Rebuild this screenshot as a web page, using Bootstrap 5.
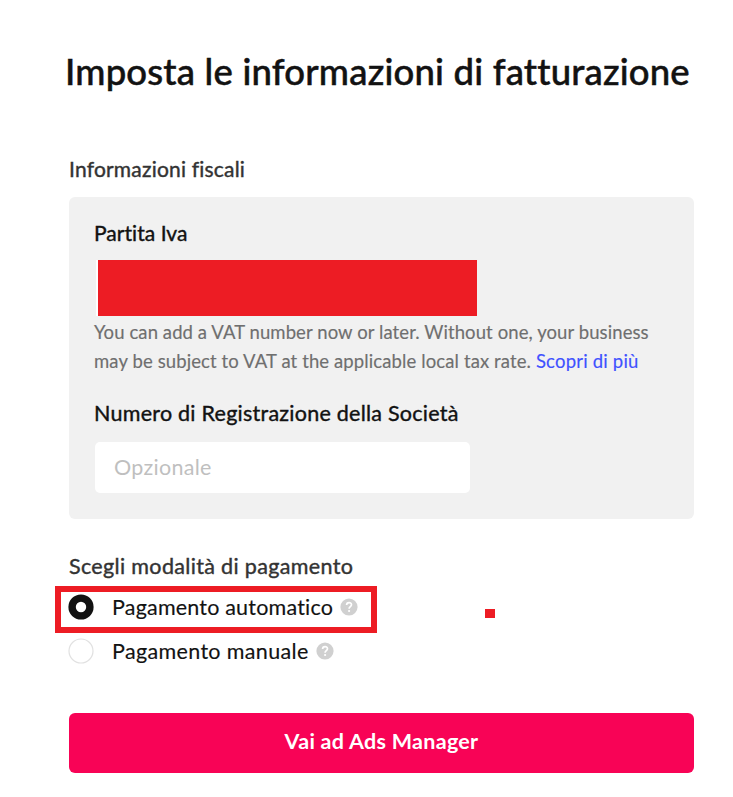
<!DOCTYPE html>
<html lang="it">
<head>
<meta charset="utf-8">
<meta name="viewport" content="width=device-width, initial-scale=1">
<title>Imposta le informazioni di fatturazione</title>
<link href="https://cdn.jsdelivr.net/npm/bootstrap@5.3.0/dist/css/bootstrap.min.css" rel="stylesheet">
<style>
body{font-family:Lato,"Open Sans",sans-serif;font-variant-ligatures:none;color:#121212;background:#fff;overflow:hidden}
.billing{width:625px;margin-left:69px;padding-top:47px}
.page-title{font-size:36.5px;line-height:48px;font-weight:500;letter-spacing:.19px;-webkit-text-stroke:.5px;margin:0 0 59px -4px;white-space:nowrap}
.label-text{font-size:21px;line-height:30px;-webkit-text-stroke:.4px;white-space:nowrap}
.section-label{color:#333}
.fiscal-label{letter-spacing:.2px}
.vat-label{letter-spacing:.05px}
.reg-label{font-size:21.5px;letter-spacing:.25px}
.choice-label{margin-top:32px;font-size:21.5px;letter-spacing:.34px}
.tax-panel{height:322px;margin-top:13px;padding:21px 25px 0;background:#f1f1f1;border-radius:6px}
.vat-field{width:381px;height:56px;margin:12px 0 0 2px;background:#ed1c24;border-left:2px solid #fff}
.help-text{font-size:18.5px;line-height:29px;letter-spacing:.09px;color:#6f6f6f;-webkit-text-stroke:.15px;margin:2px 0 22px;white-space:nowrap}
.help-text a{color:#3f51ff;letter-spacing:.2px}
.help-line{letter-spacing:.11px}
.reg-input{width:375px;height:51px;margin:14px 0 0 1px;padding:0 19px 2px;font-size:21.5px;letter-spacing:.3px;border:0;border-radius:5px}
.reg-input::placeholder{color:#bfbfbf;opacity:1}
.method{font-size:21.5px;line-height:30px;letter-spacing:.19px;-webkit-text-stroke:.15px;white-space:nowrap}
.method-auto{width:322px;height:47px;margin:5px 0 0 -14px;padding:0 0 5px 7px;border:6px solid #ed1c24}
.method-manual{height:36px;margin-left:-1px;letter-spacing:.34px}
.radio-icon{width:26px;height:26px;margin-right:18px;flex:none}
.hint-icon{width:18px;height:18px;margin-left:7px;flex:none}
.stray-dot{position:absolute;left:485px;top:609px;width:10px;height:9px;background:#ed1c24}
.cta{height:60px;margin-top:44px;background:#f80356!important;border:0;border-radius:6px;font-size:21.5px;font-weight:700;letter-spacing:.28px;padding:0 0 4px}
</style>
</head>
<body>
<main class="billing">
  <h1 class="page-title">Imposta le informazioni di fatturazione</h1>
  <div class="label-text section-label fiscal-label">Informazioni fiscali</div>
  <section class="tax-panel">
    <div class="label-text vat-label">Partita Iva</div>
    <div class="vat-field"></div>
    <p class="help-text">You can add a VAT number now or later. Without one, your business<br><span class="help-line">may be subject to VAT at the applicable local tax rate.</span> <a href="#" class="text-decoration-none">Scopri di più</a></p>
    <label class="label-text reg-label d-block" for="reg">Numero di Registrazione della Società</label>
    <input id="reg" class="form-control reg-input" placeholder="Opzionale">
  </section>
  <div class="label-text section-label choice-label">Scegli modalità di pagamento</div>
  <div class="method method-auto d-flex align-items-center">
    <svg class="radio-icon" viewBox="0 0 26 26"><circle cx="13" cy="13" r="8.9" fill="#fff" stroke="#121212" stroke-width="7.4"/></svg>
    <span>Pagamento automatico</span>
    <svg class="hint-icon" viewBox="0 0 18 18"><circle cx="9" cy="9" r="8.6" fill="#d0d0d0"/><path d="M6.6 7.1C6.6 3.7 11.5 3.9 11.5 6.8C11.5 8.6 9.1 8.7 9.1 10.7" fill="none" stroke="#fff" stroke-width="1.7"/><circle cx="9.1" cy="13" r="1.1" fill="#fff"/></svg>
  </div>
  <div class="method method-manual d-flex align-items-center">
    <svg class="radio-icon" viewBox="0 0 26 26"><circle cx="13" cy="13" r="12" fill="#fff" stroke="#e1e1e1" stroke-width="1.2"/></svg>
    <span>Pagamento manuale</span>
    <svg class="hint-icon" viewBox="0 0 18 18"><circle cx="9" cy="9" r="8.6" fill="#d0d0d0"/><path d="M6.6 7.1C6.6 3.7 11.5 3.9 11.5 6.8C11.5 8.6 9.1 8.7 9.1 10.7" fill="none" stroke="#fff" stroke-width="1.7"/><circle cx="9.1" cy="13" r="1.1" fill="#fff"/></svg>
  </div>
  <button class="btn btn-danger cta w-100 d-block">Vai ad Ads Manager</button>
</main>
<div class="stray-dot"></div>
<script src="https://cdn.jsdelivr.net/npm/bootstrap@5.3.0/dist/js/bootstrap.bundle.min.js"></script>
</body>
</html>
